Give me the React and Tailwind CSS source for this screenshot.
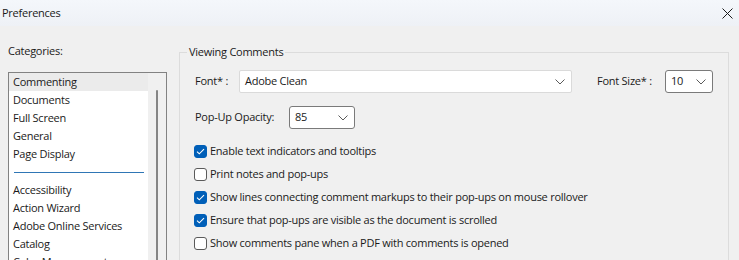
import React, { useState } from "react";

const font = { fontFamily: '"Open Sans", "Noto Sans", sans-serif' };

const categories = [
    "Commenting",
    "Documents",
    "Full Screen",
    "General",
    "Page Display",
    "-",
    "Accessibility",
    "Action Wizard",
    "Adobe Online Services",
    "Catalog",
    "Color Management",
];

const options = [
    { label: "Enable text indicators and tooltips", checked: true },
    { label: "Print notes and pop-ups", checked: false },
    { label: "Show lines connecting comment markups to their pop-ups on mouse rollover", checked: true },
    { label: "Ensure that pop-ups are visible as the document is scrolled", checked: true },
    { label: "Show comments pane when a PDF with comments is opened", checked: false },
];

const Chevron = () => (
    <svg width="10" height="6" viewBox="0 0 10 6" className="shrink-0">
        <path d="M0.5 0.5 L5 5 L9.5 0.5" fill="none" stroke="#5a5a5a" strokeWidth="1" />
    </svg>
);

const Select = ({ value, width, dark }) => (
    <div
        className={`flex h-[23px] items-center justify-between bg-white pl-[5px] pr-[6px] border ${dark ? "border-[#7a7a7a] rounded-[3px]" : "border-[#dadada] rounded-[2px]"}`}
        style={{ width }}
    >
        <span className="text-[#1a1a1a]">{value}</span>
        <Chevron />
    </div>
);

const Checkbox = ({ checked, onChange }) => (
    <button
        onClick={onChange}
        className={`flex h-[13px] w-[13px] items-center justify-center rounded-[3px] border ${checked ? "bg-[#005fb8] border-[#005fb8]" : "bg-white border-[#5a5a5a]"}`}
    >
        {checked && (
            <svg width="9" height="7" viewBox="0 0 9 7">
                <path d="M1 3.6 L3.3 5.8 L8 1.2" fill="none" stroke="white" strokeWidth="1.1" />
            </svg>
        )}
    </button>
);

export default function App() {
    const [selected, setSelected] = useState("Commenting");
    const [checks, setChecks] = useState(options.map((o) => o.checked));

    return (
        <div className="w-[739px] h-[260px] overflow-hidden bg-[#f0f0f0] text-[11px] tracking-[-0.25px] text-[#1a1a1a]" style={font}>
            {/* title bar */}
            <div className="flex h-[26px] items-center justify-between bg-gradient-to-b from-[#f4f7fb] to-[#eef1f6] pl-[2px] pr-[6px]">
                <span className="text-[#1a1a1a]">Preferences</span>
                <svg width="11" height="11" viewBox="0 0 11 11">
                    <path d="M0.5 0.5 L10.5 10.5 M10.5 0.5 L0.5 10.5" stroke="#1a1a1a" strokeWidth="1" />
                </svg>
            </div>

            <div className="flex pl-[8px]">
                {/* categories */}
                <div className="flex w-[159px] flex-col">
                    <div className="mt-[17px] h-[16px] leading-[16px]">Categories:</div>
                    <div className="mt-[13px] flex h-[200px] border border-[#828282] bg-white">
                        <div className="flex flex-1 flex-col">
                            {categories.map((c) =>
                                c === "-" ? (
                                    <div key="sep" className="flex h-[18px] items-center pl-[5px] pr-[4px]">
                                        <div className="h-px w-full bg-[#2f76b5]" />
                                    </div>
                                ) : (
                                    <div
                                        key={c}
                                        onClick={() => setSelected(c)}
                                        className={`h-[18px] pl-[4px] leading-[18px] whitespace-nowrap ${selected === c ? "bg-[#ebebeb]" : ""}`}
                                    >
                                        {c}
                                    </div>
                                )
                            )}
                        </div>
                        <div className="flex w-[18px] justify-center bg-[#f0f0f0] pt-[17px]">
                            <div className="h-full w-[2px] rounded-full bg-[#858585]" />
                        </div>
                    </div>
                </div>

                {/* viewing comments group */}
                <fieldset className="ml-[12px] mt-[18px] h-[260px] w-[550px] border border-[#dcdcdc] pl-[15px] pr-[14px]">
                    <legend className="-ml-[8px] px-[2px] leading-[16px]">Viewing Comments</legend>

                    <div className="mt-[10px] flex items-center">
                        <span className="w-[44px]">Font* :</span>
                        <Select value="Adobe Clean" width={333} />
                        <span className="ml-[25px] w-[68px]">Font Size* :</span>
                        <Select value="10" width={48} dark />
                    </div>

                    <div className="mt-[13px] flex items-center">
                        <span className="w-[94px]">Pop-Up Opacity:</span>
                        <Select value="85" width={66} dark />
                    </div>

                    <div className="mt-[11px] flex flex-col">
                        {options.map((o, i) => (
                            <label key={o.label} className="flex h-[23px] items-center gap-[3px] -ml-[1px]">
                                <Checkbox
                                    checked={checks[i]}
                                    onChange={() => setChecks(checks.map((v, j) => (j === i ? !v : v)))}
                                />
                                <span className="whitespace-nowrap">{o.label}</span>
                            </label>
                        ))}
                    </div>
                </fieldset>
            </div>
        </div>
    );
}
